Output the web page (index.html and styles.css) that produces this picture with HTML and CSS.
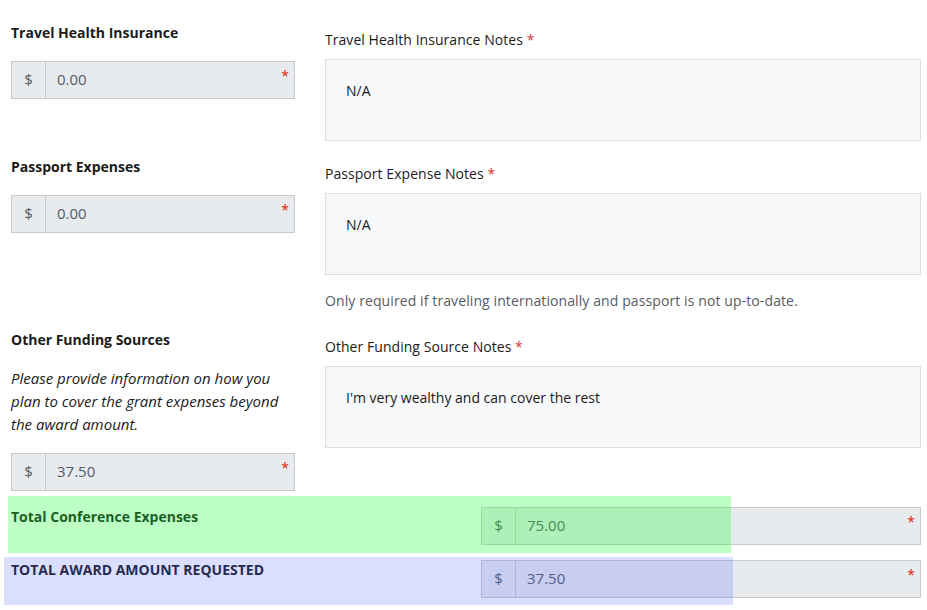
FILE: index.html
```html
<!DOCTYPE html>
<html>
<head>
<meta charset="utf-8">
<link rel="stylesheet" href="styles.css">
</head>
<body>
<div class="form">
  <div class="row row-1">
    <div class="col-left">
      <div class="label-bold">Travel Health Insurance</div>
      <div class="input-group"><span class="prefix">$</span><span class="value">0.00</span><span class="req">*</span></div>
    </div>
    <div class="col-right">
      <div class="label">Travel Health Insurance Notes <span class="req-inline">*</span></div>
      <div class="textarea">N/A</div>
    </div>
  </div>
  <div class="row row-2">
    <div class="col-left">
      <div class="label-bold">Passport Expenses</div>
      <div class="input-group"><span class="prefix">$</span><span class="value">0.00</span><span class="req">*</span></div>
    </div>
    <div class="col-right">
      <div class="label">Passport Expense Notes <span class="req-inline">*</span></div>
      <div class="textarea">N/A</div>
      <div class="help">Only required if traveling internationally and passport is not up-to-date.</div>
    </div>
  </div>
  <div class="row row-3">
    <div class="col-left">
      <div class="label-bold">Other Funding Sources</div>
      <div class="hint">Please provide information on how you plan to cover the grant expenses beyond the award amount.</div>
      <div class="input-group"><span class="prefix">$</span><span class="value">37.50</span><span class="req">*</span></div>
    </div>
    <div class="col-right">
      <div class="label">Other Funding Source Notes <span class="req-inline">*</span></div>
      <div class="textarea">I'm very wealthy and can cover the rest</div>
    </div>
  </div>
  <div class="total-row">
    <div class="label-bold">Total Conference Expenses</div>
    <div class="input-group"><span class="prefix">$</span><span class="value">75.00</span><span class="req">*</span></div>
  </div>
  <div class="total-row">
    <div class="label-bold">TOTAL AWARD AMOUNT REQUESTED</div>
    <div class="input-group"><span class="prefix">$</span><span class="value">37.50</span><span class="req">*</span></div>
  </div>
</div>
<div class="overlay overlay-green"></div>
<div class="overlay overlay-blue"></div>
</body>
</html>
```
FILE: styles.css
```css
html, body {
  margin: 0;
  padding: 0;
  background: #fff;
}
body {
  font-family: "Open Sans", "Noto Sans", sans-serif;
  font-size: 14px;
  color: #1b1b1b;
  position: relative;
  width: 927px;
  height: 610px;
  overflow: hidden;
}
.form {
  padding: 23px 6px 0 11px;
}
.row {
  display: grid;
  grid-template-columns: 284px 596px;
  column-gap: 30px;
  align-items: start;
  margin-bottom: 16px;
}
.row-2 { margin-bottom: 19px; }
.row-3 { margin-bottom: 16px; }
.col-right { padding-top: 7px; }
.label-bold {
  font-weight: 700;
  line-height: 20px;
  margin-bottom: 18px;
}
.label {
  line-height: 20px;
  margin-bottom: 9px;
  letter-spacing: 0.05px;
}
.req-inline { color: #d83933; }
.input-group {
  display: flex;
  height: 38px;
  box-sizing: border-box;
  border: 1px solid #c9c9c9;
  background: #e8ebee;
  color: #565c65;
  font-size: 15px;
  align-items: stretch;
}
.prefix {
  width: 33px;
  flex: none;
  border-right: 1px solid #c9c9c9;
  display: flex;
  align-items: center;
  justify-content: center;
  padding-bottom: 2px;
}
.value {
  flex: 1;
  display: flex;
  align-items: center;
  padding: 0 0 2px 11px;
}
.req {
  color: #e52207;
  padding: 4px 5px 0 0;
  font-size: 14px;
  line-height: 20px;
}
.textarea {
  height: 82px;
  box-sizing: border-box;
  border: 1px solid #dcdee0;
  background: #f7f8fa;
  padding: 21px 20px;
  line-height: 20px;
}
.help {
  color: #565c65;
  line-height: 20px;
  margin-top: 16px;
  letter-spacing: 0.1px;
}
.hint {
  font-style: italic;
  font-size: 15px;
  line-height: 23px;
  margin: -1px 0 17px;
}
.total-row {
  display: grid;
  grid-template-columns: 440px 440px;
  column-gap: 30px;
  align-items: start;
  margin-bottom: 15px;
}
.total-row .label-bold { margin-bottom: 0; }
.overlay {
  position: absolute;
  pointer-events: none;
}
.overlay-green {
  left: 8px;
  top: 496px;
  width: 723px;
  height: 57px;
  background: rgba(30, 255, 50, 0.29);
}
.overlay-blue {
  left: 4px;
  top: 557px;
  width: 729px;
  height: 48px;
  background: rgba(80, 100, 255, 0.21);
}
```
